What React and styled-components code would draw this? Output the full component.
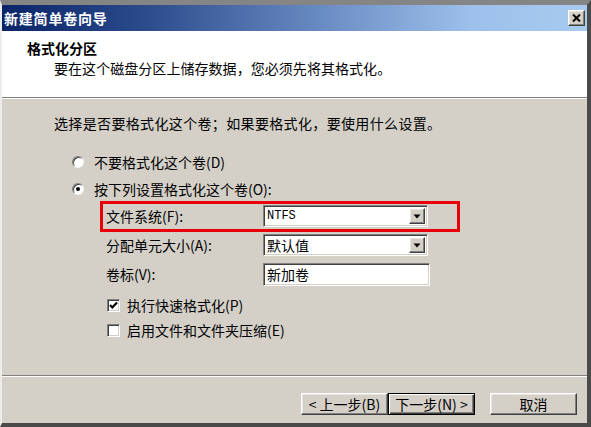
import React from 'react';
import styled, { createGlobalStyle, css } from 'styled-components';

const Global = createGlobalStyle`
  html, body { margin: 0; padding: 0; background: #ffffff; }
  body {
    font-family: "Noto Sans CJK SC", "Liberation Sans", sans-serif;
    font-size: 14px;
    color: #000;
  }
`;

const sunken = css`
  border: 1px solid;
  border-color: #808080 #ffffff #ffffff #808080;
  box-shadow: inset 1px 1px 0 #404040, inset -1px -1px 0 #d4d0c8;
`;

const raised = css`
  border: 1px solid;
  border-color: #ffffff #404040 #404040 #ffffff;
  box-shadow: inset -1px -1px 0 #808080, inset 1px 1px 0 #e8e6e0;
`;

const Window = styled.div`
  width: 591px;
  height: 427px;
  box-sizing: border-box;
  display: flex;
  flex-direction: column;
  background: #d4d0c8;
  border-top: 5px solid #858585;
  border-left: 2px solid #ececec;
  border-right: 4px solid #4a4a4a;
  border-bottom: 4px solid #4a4a4a;
  overflow: hidden;
`;

const TitleBar = styled.div`
  height: 26px;
  flex: none;
  display: flex;
  align-items: center;
  justify-content: space-between;
  padding: 0 2px 0 2px;
  background: linear-gradient(90deg, #0a2468 0%, #2c4c8c 25%, #6a8cc4 55%, #9cc0ea 80%, #a8cbf0 100%);
`;

const TitleText = styled.span`
  color: #fff;
  font-weight: bold;
  font-size: 14px;
  letter-spacing: 0.8px;
  line-height: 20px;
`;

const CloseButton = styled.div`
  ${raised};
  width: 15px;
  height: 14px;
  background: #d4d0c8;
  display: flex;
  align-items: center;
  justify-content: center;
`;

const Header = styled.div`
  height: 66px;
  flex: none;
  box-sizing: border-box;
  background: #fff;
  padding: 7px 0 0 25px;
`;

const HeaderTitle = styled.div`
  font-weight: bold;
  font-size: 14px;
  line-height: 20px;
`;

const HeaderSub = styled.div`
  font-size: 14px;
  line-height: 20px;
  padding-left: 27px;
  letter-spacing: 0.05px;
`;

const Separator = styled.div`
  height: 1px;
  flex: none;
  background: #808080;
  border-bottom: 1px solid #ffffff;
`;

const Body = styled.div`
  flex: 1;
  padding: 14px 0 0 52px;
`;

const Intro = styled.div`
  line-height: 20px;
  letter-spacing: 0.35px;
`;

const RadioGroup = styled.div`
  margin-top: 19px;
  display: flex;
  flex-direction: column;
  gap: 7px;
`;

const RadioRow = styled.div`
  display: flex;
  align-items: center;
  height: 20px;
  padding-left: 18px;
  gap: 10px;
`;

const RadioCircle = styled.span`
  width: 12px;
  height: 12px;
  box-sizing: border-box;
  border-radius: 50%;
  background: #fff;
  border: 1px solid;
  border-color: #808080 #f4f4f4 #f4f4f4 #808080;
  box-shadow: inset 1px 1px 0 #404040;
  display: flex;
  align-items: center;
  justify-content: center;
  &::after {
    content: '';
    width: 4px;
    height: 4px;
    border-radius: 50%;
    background: ${p => (p.$checked ? '#000' : 'transparent')};
  }
`;

const Settings = styled.div`
  margin-top: 6px;
  padding-left: 52px;
  display: flex;
  flex-direction: column;
  gap: 7px;
`;

const FieldRow = styled.div`
  position: relative;
  display: flex;
  align-items: center;
  height: 22px;
  ${p => p.$highlight && css`
    &::after {
      content: '';
      position: absolute;
      top: -4px;
      left: -6px;
      width: 360px;
      bottom: -5px;
      border: 3px solid #e8000a;
      box-sizing: border-box;
      pointer-events: none;
    }
  `}
`;

const Label = styled.span`
  width: 157px;
  flex: none;
  line-height: 20px;
`;

const Combo = styled.div`
  ${sunken};
  width: 165px;
  height: 22px;
  box-sizing: border-box;
  background: #fff;
  display: flex;
  align-items: center;
  justify-content: space-between;
  padding: 2px 2px 2px 3px;
`;

const ComboValue = styled.span`
  font-family: ${p => (p.$mono ? '"Liberation Mono", "DejaVu Sans Mono", monospace' : 'inherit')};
  font-size: ${p => (p.$mono ? '12px' : '14px')};
  font-weight: normal;
  line-height: 16px;
`;

const DropButton = styled.span`
  ${raised};
  width: 16px;
  height: 16px;
  box-sizing: border-box;
  background: #d4d0c8;
  display: flex;
  align-items: center;
  justify-content: center;
`;

const TextBox = styled.div`
  ${sunken};
  width: 167px;
  height: 23px;
  box-sizing: border-box;
  background: #fff;
  display: flex;
  align-items: center;
  padding-left: 3px;
`;

const CheckGroup = styled.div`
  margin-top: 10px;
  padding-left: 53px;
  display: flex;
  flex-direction: column;
  gap: 5px;
`;

const CheckRow = styled.div`
  display: flex;
  align-items: center;
  height: 20px;
  gap: 7px;
`;

const CheckBox = styled.span`
  ${sunken};
  width: 13px;
  height: 13px;
  box-sizing: border-box;
  background: #fff;
  display: flex;
  align-items: center;
  justify-content: center;
`;

const Footer = styled.div`
  height: 46px;
  flex: none;
  box-sizing: border-box;
  padding: 16px 10px 0 0;
  display: flex;
  justify-content: flex-end;
  align-items: flex-start;
`;

const ButtonPair = styled.div`
  display: flex;
  margin-right: 15px;
`;

const Button = styled.div`
  ${raised};
  width: 87px;
  height: 22px;
  box-sizing: border-box;
  background: #d4d0c8;
  display: flex;
  align-items: center;
  justify-content: center;
  font-size: 14px;
  line-height: 18px;
  white-space: nowrap;
  ${p => p.$default && css`
    border-color: #000;
    box-shadow: inset 1px 1px 0 #ffffff, inset -1px -1px 0 #404040, inset -2px -2px 0 #808080;
  `}
`;

const Arrow = () => (
  <svg width="8" height="5" viewBox="0 0 8 5">
    <polygon points="0.5,0.5 7.5,0.5 4,4.5" fill="#000" />
  </svg>
);

const Check = () => (
  <svg width="9" height="9" viewBox="0 0 9 9">
    <polyline points="1,4 3.3,6.5 8,1.5" fill="none" stroke="#000" strokeWidth="2.2" />
  </svg>
);

const CloseX = () => (
  <svg width="9" height="8" viewBox="0 0 9 8">
    <path d="M1 0.5 L8 7.5 M8 0.5 L1 7.5" stroke="#000" strokeWidth="2" />
  </svg>
);

export default function App() {
  return (
    <>
      <Global />
      <Window>
        <TitleBar>
          <TitleText>新建简单卷向导</TitleText>
          <CloseButton><CloseX /></CloseButton>
        </TitleBar>
        <Header>
          <HeaderTitle>格式化分区</HeaderTitle>
          <HeaderSub>要在这个磁盘分区上储存数据，您必须先将其格式化。</HeaderSub>
        </Header>
        <Separator />
        <Body>
          <Intro>选择是否要格式化这个卷；如果要格式化，要使用什么设置。</Intro>
          <RadioGroup>
            <RadioRow>
              <RadioCircle />
              <span>不要格式化这个卷(D)</span>
            </RadioRow>
            <RadioRow>
              <RadioCircle $checked />
              <span>按下列设置格式化这个卷(O):</span>
            </RadioRow>
          </RadioGroup>
          <Settings>
            <FieldRow $highlight>
              <Label>文件系统(F):</Label>
              <Combo>
                <ComboValue $mono>NTFS</ComboValue>
                <DropButton><Arrow /></DropButton>
              </Combo>
            </FieldRow>
            <FieldRow>
              <Label>分配单元大小(A):</Label>
              <Combo>
                <ComboValue>默认值</ComboValue>
                <DropButton><Arrow /></DropButton>
              </Combo>
            </FieldRow>
            <FieldRow>
              <Label>卷标(V):</Label>
              <TextBox>新加卷</TextBox>
            </FieldRow>
          </Settings>
          <CheckGroup>
            <CheckRow>
              <CheckBox><Check /></CheckBox>
              <span>执行快速格式化(P)</span>
            </CheckRow>
            <CheckRow>
              <CheckBox />
              <span>启用文件和文件夹压缩(E)</span>
            </CheckRow>
          </CheckGroup>
        </Body>
        <Separator />
        <Footer>
          <ButtonPair>
            <Button>&lt; 上一步(B)</Button>
            <Button $default>下一步(N) &gt;</Button>
          </ButtonPair>
          <Button>取消</Button>
        </Footer>
      </Window>
    </>
  );
}
